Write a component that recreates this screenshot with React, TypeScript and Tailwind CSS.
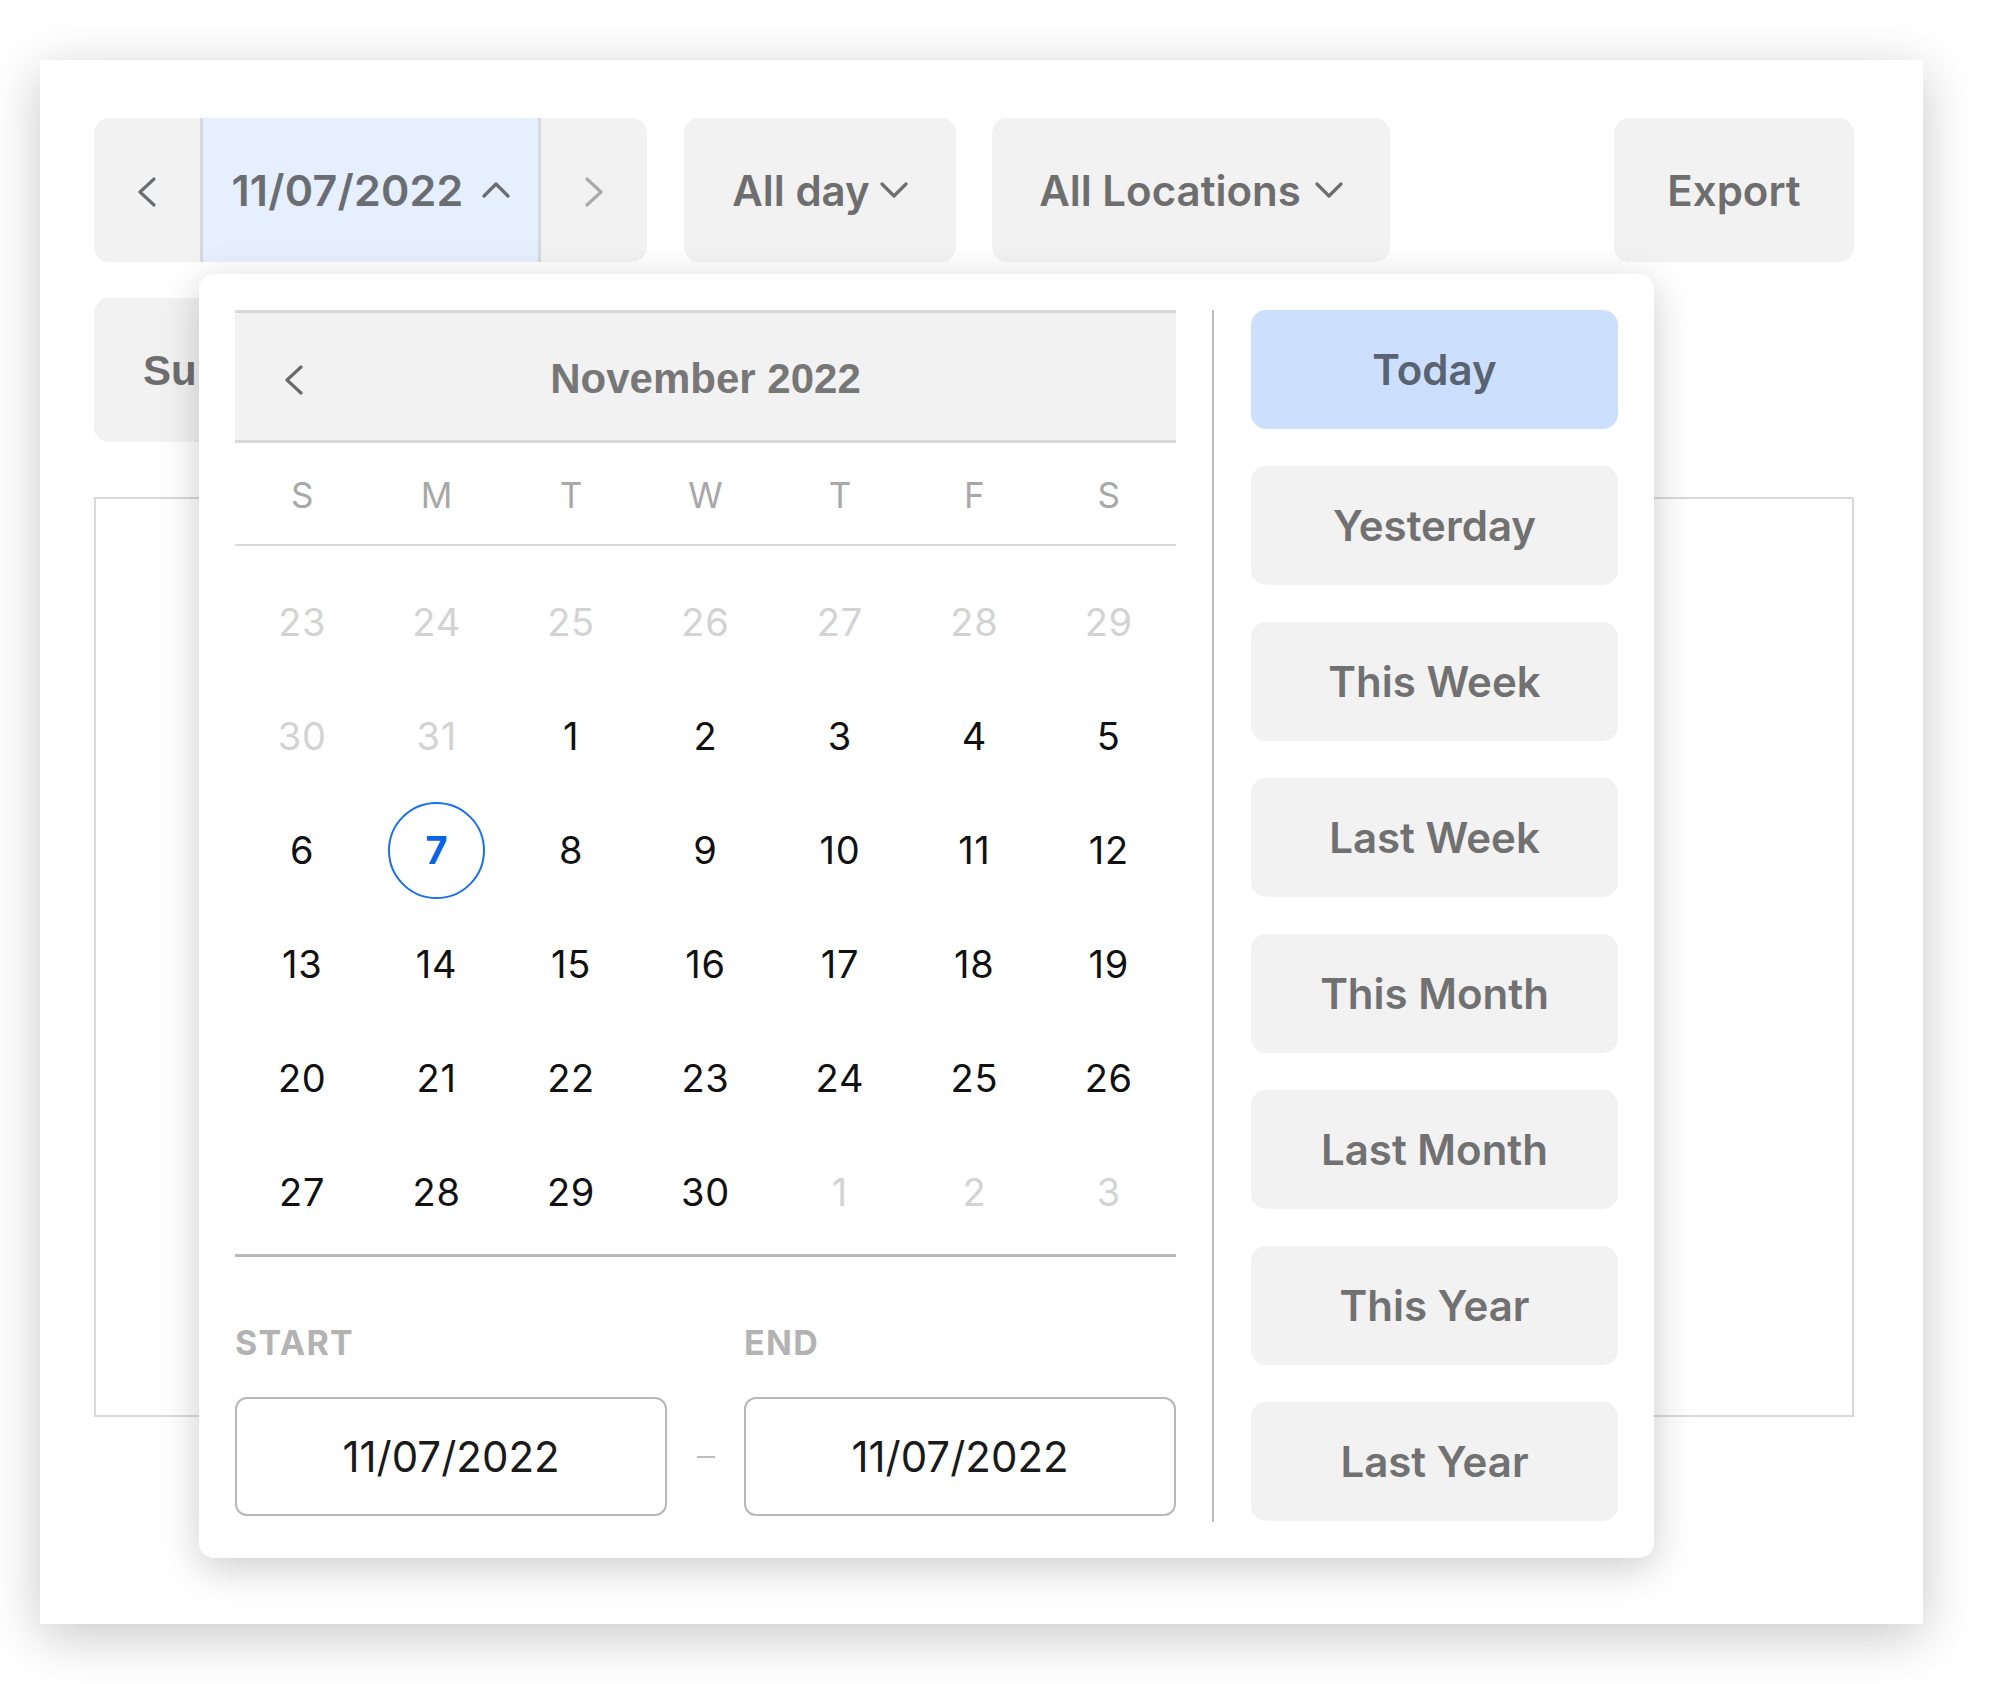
import React from "react";

const Chevron = ({ dir, color, w = 18, h = 30, sw = 3.2 }: { dir: "left" | "right" | "up" | "down"; color: string; w?: number; h?: number; sw?: number }) => {
  let pts = "";
  if (dir === "left") pts = `${w - 2},2 2,${h / 2} ${w - 2},${h - 2}`;
  if (dir === "right") pts = `2,2 ${w - 2},${h / 2} 2,${h - 2}`;
  if (dir === "up") pts = `2,${h - 2} ${w / 2},2 ${w - 2},${h - 2}`;
  if (dir === "down") pts = `2,2 ${w / 2},${h - 2} ${w - 2},2`;
  return (
    <svg width={w} height={h} viewBox={`0 0 ${w} ${h}`} fill="none">
      <polyline points={pts} stroke={color} strokeWidth={sw} strokeLinecap="round" strokeLinejoin="round" />
    </svg>
  );
};

type Day = { n: number; faded?: boolean; sel?: boolean };

const rows: Day[][] = [
  [23, 24, 25, 26, 27, 28, 29].map((n) => ({ n, faded: true })),
  [{ n: 30, faded: true }, { n: 31, faded: true }, { n: 1 }, { n: 2 }, { n: 3 }, { n: 4 }, { n: 5 }],
  [{ n: 6 }, { n: 7, sel: true }, { n: 8 }, { n: 9 }, { n: 10 }, { n: 11 }, { n: 12 }],
  [13, 14, 15, 16, 17, 18, 19].map((n) => ({ n })),
  [20, 21, 22, 23, 24, 25, 26].map((n) => ({ n })),
  [{ n: 27 }, { n: 28 }, { n: 29 }, { n: 30 }, { n: 1, faded: true }, { n: 2, faded: true }, { n: 3, faded: true }],
];

const presets = ["Today", "Yesterday", "This Week", "Last Week", "This Month", "Last Month", "This Year", "Last Year"];

export default function App() {
  return (
    <div className="w-[2004px] h-[1684px] bg-white overflow-hidden font-['Inter',sans-serif] pt-[60px] pl-[40px]">
      <div className="relative w-[1883px] h-[1564px] bg-white shadow-[0_12px_50px_rgba(0,0,0,0.22)]">
        <div className="flex flex-col pl-[54px] pt-[58px] w-[1814px]">
          {/* Row 1 */}
          <div className="flex h-[144px]">
            <div className="flex w-[553px] rounded-[15px] bg-[#f2f2f2] overflow-hidden">
              <div className="w-[106px] flex items-center justify-center pt-[4px]">
                <Chevron dir="left" color="#6b6e73" w={18} h={30} />
              </div>
              <div className="w-[341px] flex items-center justify-center gap-[18px] bg-[#e5effd] border-x-[3px] border-[#d6d9dd]">
                <span className="text-[43px] font-semibold text-[#6a6e73] tracking-[0.005em]">11/07/2022</span>
                <Chevron dir="up" color="#6a6e73" w={28} h={16} />
              </div>
              <div className="w-[106px] flex items-center justify-center pt-[4px]">
                <Chevron dir="right" color="#ababab" w={18} h={30} />
              </div>
            </div>
            <div className="ml-[37px] w-[272px] rounded-[15px] bg-[#f2f2f2] flex items-center justify-center gap-[10px]">
              <span className="text-[42px] font-semibold text-[#6e6e6e]">All day</span>
              <Chevron dir="down" color="#6e6e6e" w={28} h={16} />
            </div>
            <div className="ml-[36px] w-[398px] rounded-[15px] bg-[#f2f2f2] flex items-center justify-center gap-[14px]">
              <span className="text-[42px] font-semibold text-[#6e6e6e]">All Locations</span>
              <Chevron dir="down" color="#6e6e6e" w={28} h={16} />
            </div>
            <div className="ml-auto w-[240px] rounded-[15px] bg-[#f2f2f2] flex items-center justify-center">
              <span className="text-[42px] font-semibold text-[#6e6e6e]">Export</span>
            </div>
          </div>
          {/* Row 2 */}
          <div className="mt-[36px] flex h-[144px]">
            <div className="w-[320px] rounded-[15px] bg-[#f2f2f2] flex items-center pl-[49px]">
              <span className="text-[42px] font-bold text-[#6e6e6e] font-['Liberation_Sans',sans-serif]">Summary</span>
            </div>
          </div>
          {/* Box */}
          <div className="mt-[55px] h-[920px] w-[1760px] border-2 border-[#d9d9d9]" />
        </div>

        {/* Popover */}
        <div className="absolute left-[159px] top-[214px] w-[1455px] h-[1284px] rounded-[15px] bg-white shadow-[0_10px_40px_rgba(0,0,0,0.2)] p-[36px] flex">
          <div className="w-[941px] flex flex-col">
            <div className="relative h-[133px] bg-[#f2f2f2] border-y-[3px] border-[#d9d9d9] flex items-center justify-center pt-[4px]">
              <div className="absolute left-[50px] top-[50%] -translate-y-[40%] flex">
                <Chevron dir="left" color="#6b6b6b" w={18} h={30} />
              </div>
              <span className="text-[42px] font-bold text-[#777777] font-['Liberation_Sans',sans-serif]">November 2022</span>
            </div>
            <div className="h-[103px] grid grid-cols-7 items-center border-b-2 border-[#d9d9d9] pt-[4px]">
              {["S", "M", "T", "W", "T", "F", "S"].map((d, i) => (
                <div key={i} className="text-center text-[35px] text-[#a8a8a8]">{d}</div>
              ))}
            </div>
            <div className="pt-[19px] pb-[5px] border-b-[3px] border-[#b8b8b8]">
              {rows.map((r, ri) => (
                <div key={ri} className="grid grid-cols-7 h-[114px] items-center">
                  {r.map((d, di) => (
                    <div key={di} className="flex items-center justify-center">
                      {d.sel ? (
                        <div className="w-[97px] h-[97px] rounded-full border-[2.5px] border-[#1a6ff0] flex items-center justify-center text-[38px] font-bold text-[#0b63e5]">
                          {d.n}
                        </div>
                      ) : (
                        <span className={`text-[38px] tracking-[0.02em] ${d.faded ? "text-[#d3d3d3]" : "text-[#111111]"}`}>{d.n}</span>
                      )}
                    </div>
                  ))}
                </div>
              ))}
            </div>
            <div className="mt-[63px] flex h-[44px] items-center">
              <div className="w-[432px] text-[34px] font-bold tracking-[0.04em] text-[#b3b3b3]">START</div>
              <div className="w-[77px]" />
              <div className="w-[432px] text-[34px] font-bold tracking-[0.04em] text-[#b3b3b3]">END</div>
            </div>
            <div className="mt-[33px] flex items-center">
              <div className="w-[432px] h-[119px] border-2 border-[#b8b8b8] rounded-[12px] flex items-center justify-center text-[42px] text-[#1a1a1a]">
                11/07/2022
              </div>
              <div className="w-[77px] flex justify-center">
                <div className="w-[18px] h-[2px] bg-[#bdbdbd]" />
              </div>
              <div className="w-[432px] h-[119px] border-2 border-[#b8b8b8] rounded-[12px] flex items-center justify-center text-[42px] text-[#1a1a1a]">
                11/07/2022
              </div>
            </div>
          </div>
          <div className="ml-[36px] w-[2px] bg-[#bdbdbd]" />
          <div className="ml-[37px] w-[367px] flex flex-col gap-[37px]">
            {presets.map((p, i) => (
              <div
                key={p}
                className={`h-[119px] rounded-[15px] flex items-center justify-center text-[42px] font-semibold ${
                  i === 0 ? "bg-[#cce0fd] text-[#5a6372]" : "bg-[#f2f2f2] text-[#717171]"
                }`}
              >
                {p}
              </div>
            ))}
          </div>
        </div>
      </div>
    </div>
  );
}
